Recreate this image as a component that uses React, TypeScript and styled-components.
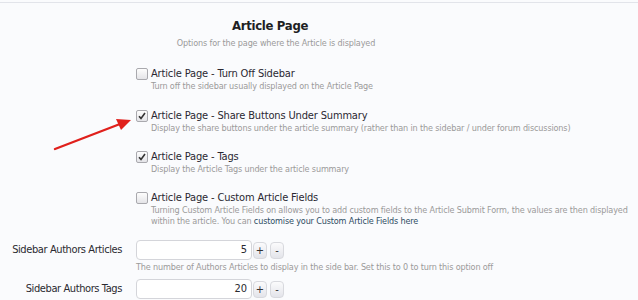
import React from "react";
import styled, { createGlobalStyle } from "styled-components";

const GlobalStyle = createGlobalStyle`
  body {
    margin: 0;
    background: #fafbfd;
    font-family: "DejaVu Sans", Verdana, sans-serif;
    font-stretch: condensed;
  }
`;

const Page = styled.div`
  position: relative;
  margin-top: 2px;
  border-top: 1px solid #e2e4ea;
  height: 297px;
  overflow: hidden;
`;

const Header = styled.div`
  width: 552px;
  text-align: center;
  padding-top: 14px;
  h1 {
    margin: 0;
    font-size: 13px;
    letter-spacing: -0.3px;
    font-weight: bold;
    color: #1f1f24;
    padding-right: 12px;
    line-height: 17px;
  }
  p {
    margin: 4px 0 0;
    font-size: 9px;
    letter-spacing: -0.15px;
    color: #9a9a9a;
  }
`;

const Form = styled.div`
  display: flex;
  flex-direction: column;
  margin-top: 19px;
`;

const Row = styled.div<{ $gap?: number }>`
  display: grid;
  grid-template-columns: 122px 1fr;
  column-gap: 14px;
  margin-bottom: ${({ $gap }) => $gap ?? 0}px;
`;

const Label = styled.div`
  text-align: right;
  font-size: 11px;
  letter-spacing: -0.4px;
  color: #2a2a30;
  padding-top: 3px;
  white-space: nowrap;
`;

const Check = styled.label`
  display: flex;
  gap: 3px;
  align-items: flex-start;
`;

const Box = styled.span<{ $checked?: boolean }>`
  flex: none;
  width: 10px;
  height: 10px;
  margin-top: 1px;
  border: 1px solid #a9a9ae;
  border-radius: 2px;
  background: linear-gradient(#fdfdfd, #e4e4e8);
  display: flex;
  align-items: center;
  justify-content: center;
`;

const Text = styled.div`
  display: flex;
  flex-direction: column;
`;

const Title = styled.span`
  font-size: 11px;
  letter-spacing: -0.15px;
  color: #2a2832;
  line-height: 14px;
`;

const Explain = styled.span<{ $top?: number }>`
  font-size: 9px;
  letter-spacing: -0.15px;
  color: #9a9a9a;
  line-height: 11px;
  margin-top: ${({ $top }) => $top ?? 0}px;
  a {
    color: #2e4d63;
    text-decoration: none;
  }
`;

const Spin = styled.div`
  display: flex;
  align-items: center;
  gap: 1px;
`;

const Input = styled.div`
  width: 110px;
  height: 18px;
  border: 1px solid #d4d5da;
  border-radius: 4px;
  background: #fff;
  font-size: 11px;
  color: #2a2a30;
  text-align: right;
  padding-right: 4px;
  line-height: 18px;
`;

const Buttons = styled.div`
  display: flex;
  gap: 3px;
`;

const SpinButton = styled.span`
  width: 12px;
  height: 15px;
  border: 1px solid #d8d9de;
  border-radius: 4px;
  background: linear-gradient(#fbfbfc, #e3e4ea);
  font-size: 11px;
  color: #333;
  display: flex;
  align-items: center;
  justify-content: center;
`;

const Arrow = styled.svg`
  position: absolute;
  left: 50px;
  top: 97px;
`;

const Tick = () => (
  <svg width="8" height="8" viewBox="0 0 8 8">
    <path d="M1 4.2 L3 6.4 L7 1" stroke="#333" strokeWidth="1.6" fill="none" />
  </svg>
);

const options = [
  {
    title: "Article Page - Turn Off Sidebar",
    explain: "Turn off the sidebar usually displayed on the Article Page",
    checked: false,
  },
  {
    title: "Article Page - Share Buttons Under Summary",
    explain:
      "Display the share buttons under the article summary (rather than in the sidebar / under forum discussions)",
    checked: true,
  },
  {
    title: "Article Page - Tags",
    explain: "Display the Article Tags under the article summary",
    checked: true,
  },
];

const Spinner = ({ value }: { value: number }) => (
  <Spin>
    <Input>{value}</Input>
    <Buttons>
      <SpinButton>+</SpinButton>
      <SpinButton>-</SpinButton>
    </Buttons>
  </Spin>
);

export default function App() {
  return (
    <>
      <GlobalStyle />
      <Page>
        <Header>
          <h1>Article Page</h1>
          <p>Options for the page where the Article is displayed</p>
        </Header>
        <Form>
          {options.map((o, i) => (
            <Row key={o.title} $gap={i === 0 ? 17 : 16}>
              <div />
              <Check>
                <Box $checked={o.checked}>{o.checked && <Tick />}</Box>
                <Text>
                  <Title>{o.title}</Title>
                  <Explain>{o.explain}</Explain>
                </Text>
              </Check>
            </Row>
          ))}
          <Row $gap={13}>
            <div />
            <Check>
              <Box />
              <Text>
                <Title>Article Page - Custom Article Fields</Title>
                <Explain>
                  Turning Custom Article Fields on allows you to add custom fields to the Article Submit Form, the values are then displayed
                  <br />
                  within the article. You can <a href="#">customise your Custom Article Fields here</a>
                </Explain>
              </Text>
            </Check>
          </Row>
          <Row $gap={6}>
            <Label>Sidebar Authors Articles</Label>
            <Text>
              <Spinner value={5} />
              <Explain $top={2}>
                The number of Authors Articles to display in the side bar. Set this to 0 to turn this option off
              </Explain>
            </Text>
          </Row>
          <Row>
            <Label>Sidebar Authors Tags</Label>
            <Spinner value={20} />
          </Row>
        </Form>
        <Arrow width="90" height="60" viewBox="0 0 90 60">
          <line x1="5" y1="49" x2="70" y2="24" stroke="#e0201c" strokeWidth="2.4" strokeLinecap="round" />
          <polygon points="81,20 66,19 71,30" fill="#e0201c" />
        </Arrow>
      </Page>
    </>
  );
}
